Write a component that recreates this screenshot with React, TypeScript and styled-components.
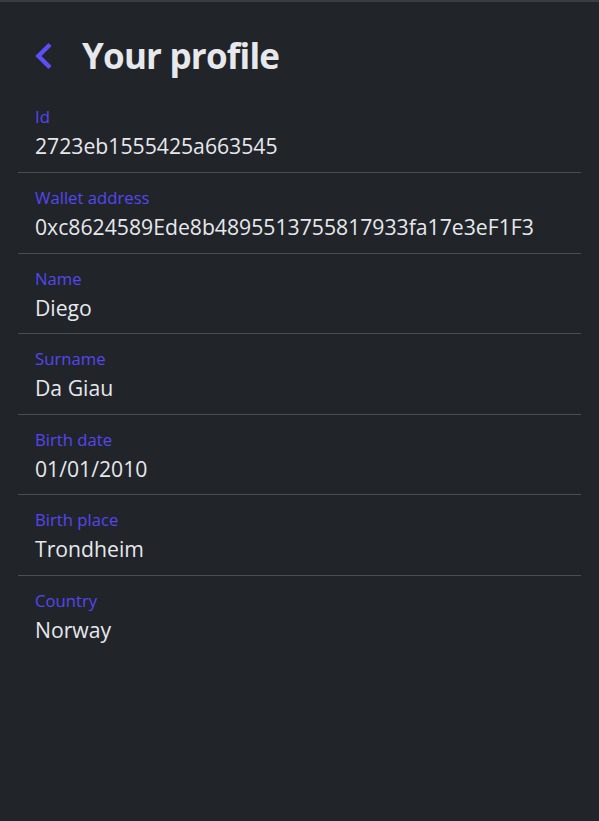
import React from "react";
import styled, { createGlobalStyle } from "styled-components";

const Global = createGlobalStyle`
  html, body { margin: 0; padding: 0; background: #212429; }
  body { font-family: "Open Sans", "Noto Sans", sans-serif; }
`;

const Page = styled.div`
  min-height: 821px;
  box-sizing: border-box;
  border-top: 2px solid #3a3d42;
  background: #212429;
  padding: 0 18px;
`;

const Header = styled.header`
  display: flex;
  align-items: center;
  gap: 29px;
  padding: 36.4px 0 0 17px;
  height: 35px;
`;

const BackButton = styled.button`
  background: none;
  border: 0;
  padding: 0;
  display: flex;
  cursor: pointer;
`;

const Title = styled.h1`
  margin: 0;
  font-size: 35px;
  line-height: 35px;
  font-weight: 700;
  color: #e6e8ec;
  letter-spacing: -0.8px;
`;

const List = styled.dl`
  margin: 19px 0 0;
  padding: 0;
`;

const Row = styled.div`
  padding: 14px 0 11.6px 17px;
  border-bottom: 1px solid #4a4d52;
  &:last-child { border-bottom: 0; }
`;

const Label = styled.dt`
  font-size: 16.7px;
  line-height: 22px;
  color: #5547f2;
`;

const Value = styled.dd`
  margin: 4px 0 0;
  font-size: 21.2px;
  line-height: 28px;
  color: #e6e8ec;
`;

const fields: [string, string][] = [
  ["Id", "2723eb1555425a663545"],
  ["Wallet address", "0xc8624589Ede8b4895513755817933fa17e3eF1F3"],
  ["Name", "Diego"],
  ["Surname", "Da Giau"],
  ["Birth date", "01/01/2010"],
  ["Birth place", "Trondheim"],
  ["Country", "Norway"],
];

export default function App() {
  return (
    <>
      <Global />
      <Page>
        <Header>
          <BackButton aria-label="Back">
            <svg width="18" height="28" viewBox="0 0 18 28">
              <path d="M15 2.5 L3.5 14 L15 25.5" fill="none" stroke="#5b4ff5" strokeWidth="4.5" />
            </svg>
          </BackButton>
          <Title>Your profile</Title>
        </Header>
        <List>
          {fields.map(([k, v]) => (
            <Row key={k}>
              <Label>{k}</Label>
              <Value>{v}</Value>
            </Row>
          ))}
        </List>
      </Page>
    </>
  );
}
